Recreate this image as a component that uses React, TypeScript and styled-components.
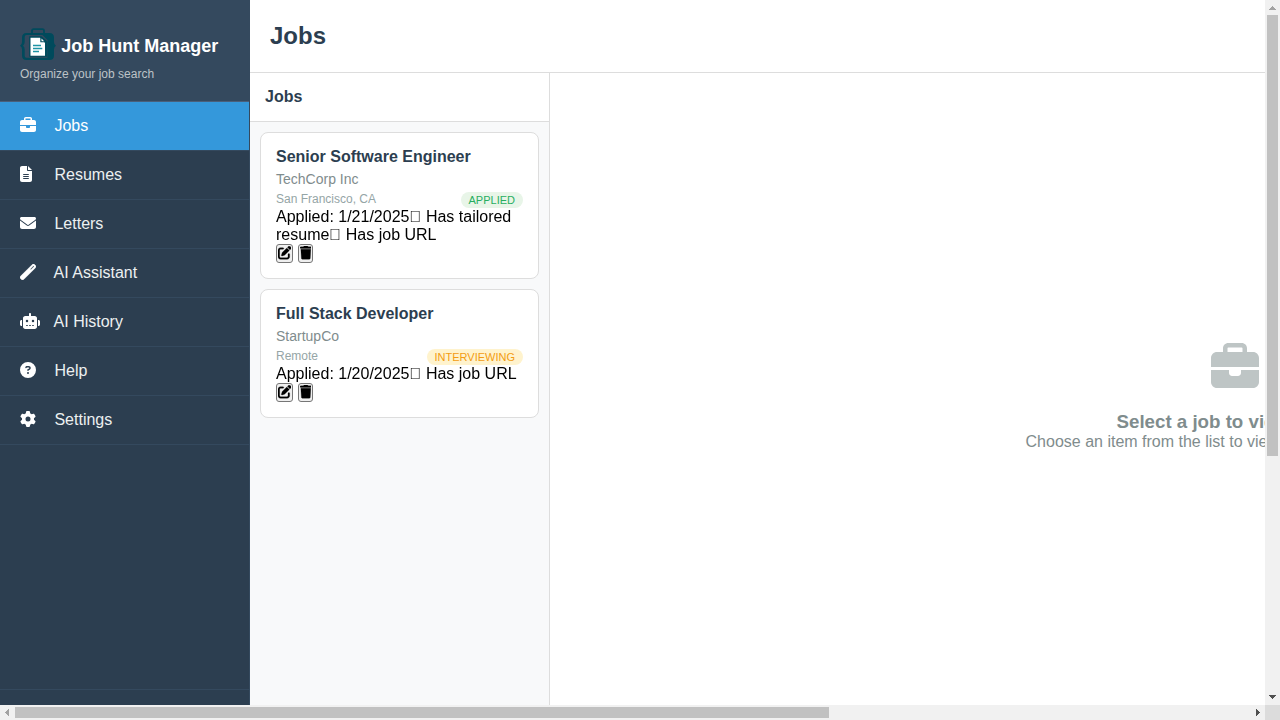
import React from 'react';
import styled, { createGlobalStyle } from 'styled-components';
import {
  FaBriefcase, FaFileLines, FaEnvelope, FaWandMagic, FaRobot,
  FaCircleQuestion, FaGear, FaPenToSquare, FaTrash,
} from 'react-icons/fa6';

const Global = createGlobalStyle`
  * { box-sizing: border-box; margin: 0; padding: 0; }
  body { font-family: "Liberation Sans", Arial, sans-serif; font-size: 16px; background: #fff; overflow: hidden; }
  svg { display: block; }
`;

const Screen = styled.div`
  display: grid;
  grid-template-columns: 1265px 15px;
  grid-template-rows: 705px 15px;
  width: 1280px;
  height: 720px;
  overflow: hidden;
`;
const Viewport = styled.div`
  display: flex;
  overflow: hidden;
`;
const Sidebar = styled.aside`
  width: 250px;
  flex: none;
  display: flex;
  flex-direction: column;
  background: #2c3e50;
  border-right: 1px solid #34495e;
  color: #ecf0f1;
`;
const Brand = styled.div`
  height: 102px;
  padding: 28px 20px 0;
  background: #34495e;
  border-bottom: 1px solid #4a5f7a;
`;
const BrandRow = styled.div`
  display: flex;
  align-items: center;
  gap: 5.25px;
  height: 32px;
`;
const BrandName = styled.h1`
  font-size: 18px;
  line-height: 20px;
  color: #fff;
  padding-top: 4px;
  white-space: nowrap;
`;
const Tagline = styled.p`
  margin-top: 7px;
  font-size: 12px;
  line-height: 14px;
  color: #bdc3c7;
`;
const Nav = styled.nav`flex: 1;`;
const NavItem = styled.a<{ $active?: boolean }>`
  display: flex;
  align-items: center;
  height: 49px;
  padding: 0 20px;
  border-bottom: 1px solid #34495e;
  background: ${p => (p.$active ? '#3498db' : 'transparent')};
  color: ${p => (p.$active ? '#fff' : '#ecf0f1')};
  line-height: 18px;
  white-space: pre;
`;
const NavIcon = styled.span<{ $w: number; $stroke?: number }>`
  width: 20px;
  margin-right: 10px;
  padding-bottom: 2px;
  color: #fff;
  svg { width: ${p => p.$w}px; height: 16px; stroke-width: ${p => p.$stroke ?? 0}; }
`;
const SidebarFooter = styled.div`
  height: 16px;
  border-top: 1px solid #34495e;
`;
const Main = styled.main`
  width: 1670px;
  flex: none;
  display: flex;
  flex-direction: column;
`;
const PageHeader = styled.header`
  height: 73px;
  padding: 22px 20px 0;
  border-bottom: 1px solid #ddd;
  h2 { font-size: 24px; line-height: 28px; color: #2c3e50; }
`;
const Columns = styled.div`
  flex: 1;
  display: flex;
  min-height: 0;
`;
const ListPane = styled.section`
  width: 300px;
  flex: none;
  background: #f8f9fa;
  border-right: 1px solid #ddd;
`;
const ListHeader = styled.div`
  height: 49px;
  padding: 15px;
  background: #fff;
  border-bottom: 1px solid #ddd;
  h3 { font-size: 16px; line-height: 18px; color: #2c3e50; }
`;
const Cards = styled.div`
  display: flex;
  flex-direction: column;
  gap: 10px;
  padding: 10px;
`;
const Card = styled.article`
  padding: 15px;
  background: #fff;
  border: 1px solid #ddd;
  border-radius: 8px;
`;
const Title = styled.h4`
  font-size: 16px;
  line-height: 18px;
  margin-bottom: 5px;
  color: #2c3e50;
`;
const Company = styled.div`
  font-size: 14px;
  line-height: 16px;
  margin-bottom: 5px;
  color: #7f8c8d;
`;
const Meta = styled.div`
  display: flex;
  justify-content: space-between;
  align-items: flex-start;
  height: 16px;
  font-size: 12px;
  line-height: 14px;
  color: #95a5a6;
`;
const Badge = styled.span<{ $tone: 'green' | 'amber' }>`
  height: 16px;
  padding: 2px 8px;
  border-radius: 12px;
  font-size: 11px;
  line-height: 12px;
  background: ${p => (p.$tone === 'green' ? '#e8f5e8' : '#fff3cd')};
  color: ${p => (p.$tone === 'green' ? '#27ae60' : '#f39c12')};
`;
const Details = styled.div`
  line-height: 18px;
  color: #000;
  will-change: transform;
`;
const Actions = styled.div`
  display: flex;
  gap: 4.45px;
`;
const ActionButton = styled.button<{ $icon?: number }>`
  height: 19px;
  padding: 0 1px 1px;
  border: 1px solid #767676;
  border-radius: 3px;
  background: #efefef;
  color: #000;
  font-size: 13.333px;
  display: flex;
  align-items: center;
  svg { width: ${p => p.$icon ?? 13.333}px; stroke-width: 10; }
`;
const Empty = styled.section`
  flex: 1;
  display: flex;
  flex-direction: column;
  align-items: center;
  padding-top: 270px;
  color: #7f8c8d;
  svg { opacity: 0.5; margin-bottom: 20px; }
  h3 { font-size: 18.72px; line-height: 22px; }
  p { line-height: 18px; }
`;
const Track = styled.div<{ $vertical?: boolean }>`
  display: flex;
  flex-direction: ${p => (p.$vertical ? 'column' : 'row')};
  justify-content: space-between;
  align-items: center;
  background: #f1f1f1;
`;
const ThumbGroup = styled.div<{ $vertical?: boolean }>`
  display: flex;
  flex-direction: ${p => (p.$vertical ? 'column' : 'row')};
  align-items: center;
`;
const Thumb = styled.div<{ $w: number; $h: number }>`
  width: ${p => p.$w}px;
  height: ${p => p.$h}px;
  background: #c1c1c1;
`;
const Corner = styled.div`background: #dcdcdc;`;

const Arrow = ({ d, color }: { d: string; color: string }) => (
  <svg width="15" height="15" viewBox="0 0 15 15" fill={color} shapeRendering="crispEdges"><path d={d} /></svg>
);

const Logo = () => (
  <svg width="36" height="32" viewBox="0 0 36 32" fill="none">
    <path d="M12 6V2.800Q12 1.200 13.600 1.200H22.400Q24 1.200 24 2.800V6" stroke="#004a5c" strokeWidth="1.800" />
    <path d="M6.500 5H29.500Q34 5 34 9.500V14Q34 16.800 36 17.800Q34 19 34 21.500V27.500Q34 32 29.500 32H6.500Q2 32 2 27.500V21.500Q2 19 0 17.800Q2 16.800 2 14V9.500Q2 5 6.500 5Z" fill="#004a5c" />
    <path d="M6.500 7H22.500L27.500 12V29.800H6.500Q4.700 29.800 4.700 28V21.500Q4.700 19 3 17.800Q4.700 16.500 4.700 14V9Q4.700 7 6.500 7Z" fill="#34495e" />
    <path d="M9.200 8.200H21.500L27.500 13.500V28.800H9.200Z" fill="#004a5c" />
    <path d="M10.500 9.700H20L25 14.700V27.800H10.500Z" fill="#fff" />
    <path d="M20.300 9.700V14.300H25Z" fill="#004a5c" />
    <path d="M21.500 10.600V13.200H24.100Z" fill="#fff" />
    <path d="M13 17.500H21M13 20.500H22.300M13 23.500H19" stroke="#1f93a5" strokeWidth="1.300" />
  </svg>
);

const nav = [
  { label: 'Jobs', Icon: FaBriefcase, w: 16 },
  { label: 'Resumes', Icon: FaFileLines, w: 12 },
  { label: 'Letters', Icon: FaEnvelope, w: 16 },
  { label: 'AI Assistant', Icon: FaWandMagic, w: 16, stroke: 14 },
  { label: 'AI History', Icon: FaRobot, w: 20 },
  { label: 'Help', Icon: FaCircleQuestion, w: 16 },
  { label: 'Settings', Icon: FaGear, w: 16 },
];

const jobs = [
  { title: 'Senior Software Engineer', company: 'TechCorp Inc', place: 'San Francisco, CA', status: 'APPLIED', tone: 'green' as const, details: 'Applied: 1/21/2025\uf15c Has tailored resume\uf0c1 Has job URL' },
  { title: 'Full Stack Developer', company: 'StartupCo', place: 'Remote', status: 'INTERVIEWING', tone: 'amber' as const, details: 'Applied: 1/20/2025\uf0c1 Has job URL' },
];

export default function App() {
  return (
    <>
      <Global />
      <Screen>
        <Viewport>
          <Sidebar>
            <Brand>
              <BrandRow><Logo /><BrandName>Job Hunt Manager</BrandName></BrandRow>
              <Tagline>Organize your job search</Tagline>
            </Brand>
            <Nav>
              {nav.map(({ label, Icon, w, stroke }, i) => (
                <NavItem key={label} $active={i === 0}>
                  <NavIcon $w={w} $stroke={stroke}><Icon preserveAspectRatio="xMinYMid meet" /></NavIcon>
                  {` ${label}`}
                </NavItem>
              ))}
            </Nav>
            <SidebarFooter />
          </Sidebar>
          <Main>
            <PageHeader><h2>Jobs</h2></PageHeader>
            <Columns>
              <ListPane>
                <ListHeader><h3>Jobs</h3></ListHeader>
                <Cards>
                  {jobs.map(j => (
                    <Card key={j.title}>
                      <Title>{j.title}</Title>
                      <Company>{j.company}</Company>
                      <Meta><span>{j.place}</span><Badge $tone={j.tone}>{j.status}</Badge></Meta>
                      <Details>{j.details}</Details>
                      <Actions>
                        <ActionButton aria-label="Edit"><FaPenToSquare /></ActionButton>
                        <ActionButton aria-label="Delete" $icon={11.67}><FaTrash /></ActionButton>
                      </Actions>
                    </Card>
                  ))}
                </Cards>
              </ListPane>
              <Empty>
                <FaBriefcase size={48} />
                <h3>Select a job to view details</h3>
                <p>Choose an item from the list to view details and information</p>
              </Empty>
            </Columns>
          </Main>
        </Viewport>
        <Track $vertical>
          <ThumbGroup $vertical>
            <Arrow color="#a3a3a3" d="M7 6h1v1h1v1h1v1h1v1h-7v-1h1v-1h1v-1h1z" />
            <Thumb $w={11} $h={441} />
          </ThumbGroup>
          <Arrow color="#505050" d="M4 5h7v1h-1v1h-1v1h-1v1h-1v-1h-1v-1h-1v-1h-1z" />
        </Track>
        <Track>
          <ThumbGroup>
            <Arrow color="#a3a3a3" d="M9 4v7h-1v-1h-1v-1h-1v-1h-1v-1h1v-1h1v-1h1v-1z" />
            <Thumb $w={814} $h={11} />
          </ThumbGroup>
          <Arrow color="#505050" d="M6 4h1v1h1v1h1v1h1v1h-1v1h-1v1h-1v1h-1z" />
        </Track>
        <Corner />
      </Screen>
    </>
  );
}
